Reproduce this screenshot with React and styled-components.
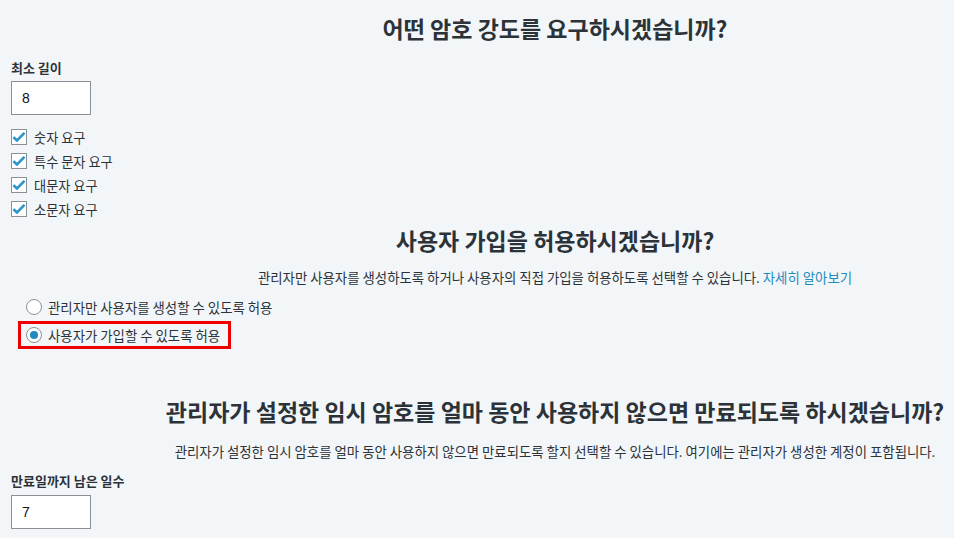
import React, { useState } from 'react';
import styled, { createGlobalStyle } from 'styled-components';

const GlobalStyle = createGlobalStyle`
  body {
    margin: 0;
    background: #f3f6f8;
    color: #2c3338;
    font-family: "Noto Sans CJK KR", "Noto Sans", sans-serif;
  }
`;

const Page = styled.div`
  padding: 0 0 0 11px;
  display: flex;
  flex-direction: column;
  align-items: flex-start;
`;

const Heading = styled.h2`
  align-self: stretch;
  margin: ${(p) => p.$top}px 0 0 145px;
  font-size: 23px;
  line-height: 30px;
  font-weight: 700;
  color: #2c3338;
  text-align: center;
`;

const Text = styled.p`
  align-self: stretch;
  margin: ${(p) => p.$top}px 0 0 145px;
  font-size: 13.4px;
  line-height: 20px;
  text-align: center;
`;

const Link = styled.a`
  color: #1e8cbe;
  text-decoration: none;
`;

const Label = styled.label`
  margin-top: ${(p) => p.$top}px;
  font-size: 13px;
  line-height: 18px;
  font-weight: 700;
`;

const Input = styled.input`
  box-sizing: border-box;
  margin-top: ${(p) => p.$top}px;
  width: 80px;
  height: 34px;
  padding: 0 10px;
  border: 1px solid #8c8f94;
  border-radius: 0;
  background: #fff;
  font-family: "Liberation Sans", Arial, sans-serif;
  font-size: 14px;
  color: #111;
  outline: none;
`;

const CheckList = styled.div`
  margin-top: 10px;
  display: flex;
  flex-direction: column;
`;

const CheckRow = styled.label`
  height: 24px;
  display: flex;
  align-items: center;
  gap: 7px;
  font-size: 13.2px;
`;

const Box = styled.span`
  box-sizing: border-box;
  width: 16px;
  height: 16px;
  border: 1px solid #8c8f94;
  background: #fff;
  display: flex;
  align-items: center;
  justify-content: center;
`;

const RadioList = styled.div`
  margin: 6px 0 0 7px;
  display: flex;
  flex-direction: column;
  align-items: flex-start;
`;

const RadioRow = styled.label`
  box-sizing: border-box;
  height: 28px;
  padding: 0 8px 0 5px;
  border: 3px solid ${(p) => (p.$marked ? '#ee0000' : 'transparent')};
  display: flex;
  align-items: center;
  gap: 6px;
  font-size: 13.4px;
  cursor: pointer;
`;

const Radio = styled.span`
  box-sizing: border-box;
  width: 16px;
  height: 16px;
  border-radius: 50%;
  border: 1px solid #8c8f94;
  background: #fff;
  display: flex;
  align-items: center;
  justify-content: center;

  &::after {
    content: '';
    width: 8px;
    height: 8px;
    border-radius: 50%;
    background: ${(p) => (p.$on ? '#1e8cbe' : 'transparent')};
  }
`;

const Check = () => (
  <svg width="14" height="14" viewBox="0 0 14 14">
    <path d="M1.5 7.2 L5 10.5 L12.5 2.8" fill="none" stroke="#2a94cc" strokeWidth="2.6" strokeLinejoin="miter" />
  </svg>
);

const checks = ['숫자 요구', '특수 문자 요구', '대문자 요구', '소문자 요구'];

export default function App() {
  const [signup, setSignup] = useState('self');

  return (
    <>
      <GlobalStyle />
      <Page>
        <Heading $top={13}>어떤 암호 강도를 요구하시겠습니까?</Heading>
        <Label $top={16}>최소 길이</Label>
        <Input $top={4} defaultValue="8" />
        <CheckList>
          {checks.map((c) => (
            <CheckRow key={c}>
              <Box><Check /></Box>
              {c}
            </CheckRow>
          ))}
        </CheckList>

        <Heading $top={4}>사용자 가입을 허용하시겠습니까?</Heading>
        <Text $top={12}>
          관리자만 사용자를 생성하도록 하거나 사용자의 직접 가입을 허용하도록 선택할 수 있습니다.{' '}
          <Link href="#">자세히 알아보기</Link>
        </Text>
        <RadioList>
          <RadioRow onClick={() => setSignup('admin')}>
            <Radio $on={signup === 'admin'} />
            관리자만 사용자를 생성할 수 있도록 허용
          </RadioRow>
          <RadioRow $marked onClick={() => setSignup('self')}>
            <Radio $on={signup === 'self'} />
            사용자가 가입할 수 있도록 허용
          </RadioRow>
        </RadioList>

        <Heading $top={47}>관리자가 설정한 임시 암호를 얼마 동안 사용하지 않으면 만료되도록 하시겠습니까?</Heading>
        <Text $top={15}>
          관리자가 설정한 임시 암호를 얼마 동안 사용하지 않으면 만료되도록 할지 선택할 수 있습니다. 여기에는 관리자가 생성한 계정이 포함됩니다.
        </Text>
        <Label $top={11}>만료일까지 남은 일수</Label>
        <Input $top={5} defaultValue="7" />
      </Page>
    </>
  );
}
